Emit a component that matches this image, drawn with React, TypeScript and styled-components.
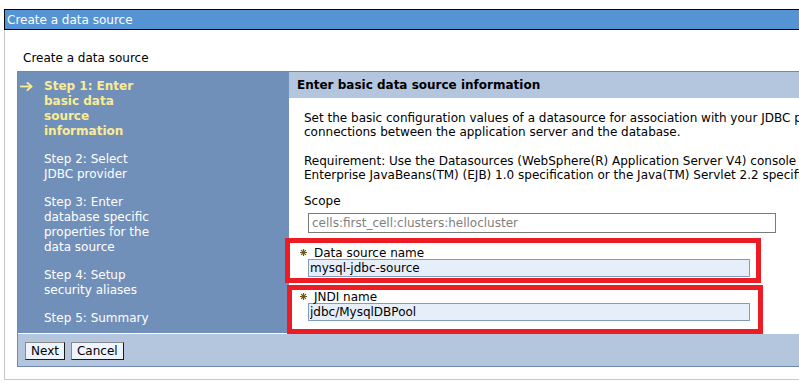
import React from 'react';
import styled, { createGlobalStyle } from 'styled-components';

const GlobalStyle = createGlobalStyle`
  html, body {
    margin: 0;
    overflow: hidden;
    background: #fff;
  }
  body {
    font-family: 'DejaVu Sans', 'Liberation Sans', sans-serif;
    font-size: 12px;
    color: #000;
  }
`;

const Page = styled.div`
  width: 1100px;
  padding: 9px 0 0 4px;
`;

const TitleBar = styled.div`
  height: 19px;
  line-height: 20px;
  padding-left: 2px;
  background: #5494d4;
  border: 1px solid #000;
  color: #fff;
`;

const Frame = styled.div`
  border-left: 1px solid #c8c8c8;
  border-bottom: 1px solid #c8c8c8;
  padding: 20px 0 12px 12px;
`;

const Heading = styled.div`
  line-height: 16px;
  padding-left: 6px;
  margin-bottom: 5px;
`;

const Wizard = styled.div`
  border-top: 1px solid #7088b0;
  border-left: 1px solid #7088b0;
  border-bottom: 1px solid #7088b0;
  background: #fff;
`;

const WizardRow = styled.div`
  display: flex;
  height: 261px;
`;

const StepNav = styled.ul`
  list-style: none;
  margin: 0;
  padding: 7px 0 0 2px;
  width: 269px;
  background: #7190b9;
  display: flex;
  flex-direction: column;
  gap: 13px;
  flex-shrink: 0;
`;

const Step = styled.li<{ $current?: boolean }>`
  display: flex;
  line-height: 15px;
  color: ${({ $current }) => ($current ? '#fbec92' : '#fff')};
  font-weight: ${({ $current }) => ($current ? 'bold' : 'normal')};
`;

const StepMarker = styled.span`
  width: 24px;
  flex-shrink: 0;
  display: flex;
  align-items: flex-start;
  padding-top: 3px;
  box-sizing: border-box;
`;

const StepText = styled.span`
  width: 112px;
`;

const Main = styled.div`
  flex: 1;
  display: flex;
  flex-direction: column;
`;

const MainHeader = styled.div`
  height: 26px;
  line-height: 27px;
  padding-left: 8px;
  background: #b4c5de;
  font-weight: bold;
`;

const Content = styled.div`
  padding: 13px 0 0 15px;
`;

const Para = styled.p`
  margin: 0 0 15px;
  line-height: 14px;
  white-space: nowrap;
`;

const ScopeLabel = styled.div`
  margin-top: -2px;
  line-height: 13px;
`;

const ScopeInput = styled.input`
  display: block;
  box-sizing: border-box;
  width: 468px;
  height: 20px;
  margin: 5px 0 5px 4px;
  padding: 0 3px;
  border: 1px solid #7a7a7a;
  background: #fff;
  color: #808080;
  font: inherit;
  outline: none;
`;

const FieldBox = styled.div<{ $shift: number; $padTop: number; $padBottom: number; $gapAbove: number }>`
  box-sizing: border-box;
  width: 476px;
  margin: ${({ $gapAbove, $shift }) => `${$gapAbove}px 0 0 ${$shift}px`};
  padding: ${({ $padTop, $padBottom, $shift }) =>
    `${$padTop}px 0 ${$padBottom}px ${4 - $shift - 5}px`};
  border: 5px solid #ed1c24;
`;

const FieldLabel = styled.label`
  display: flex;
  align-items: center;
  gap: 7px;
  height: 13px;
  margin-left: -8px;
`;

const FieldInput = styled.input`
  display: block;
  box-sizing: border-box;
  width: 442px;
  height: 18px;
  padding: 0 1px;
  border: 1px solid #7f9dbf;
  background: #e6eefa;
  color: #000;
  font: inherit;
  outline: none;
`;

const BottomBar = styled.div`
  border-top: 1px solid #fff;
  background: #b4c5de;
  height: 33px;
  padding: 8px 0 0 7px;
  box-sizing: border-box;
  display: flex;
  gap: 6px;
  align-items: flex-start;
`;

const Button = styled.button`
  height: 18px;
  padding: 0 5px;
  background: #eef4fd;
  border: 1px solid;
  border-color: #8a8a8a #1a1a1a #1a1a1a #8a8a8a;
  font: inherit;
  color: #000;
  line-height: 14px;
`;

const Required = () => (
  <svg width="7" height="7" viewBox="0 0 7 7" aria-hidden="true">
    <g stroke="#6b5a12" strokeWidth="1.2" strokeLinecap="round">
      <line x1="3.5" y1="0.5" x2="3.5" y2="6.5" />
      <line x1="0.5" y1="3.5" x2="6.5" y2="3.5" />
      <line x1="1.4" y1="1.4" x2="5.6" y2="5.6" />
      <line x1="5.6" y1="1.4" x2="1.4" y2="5.6" />
    </g>
  </svg>
);

const CurrentArrow = () => (
  <svg width="13" height="9" viewBox="0 0 13 9" aria-hidden="true">
    <g stroke="#fbec92" strokeWidth="1.8" fill="none" strokeLinecap="square">
      <line x1="1" y1="4.5" x2="11" y2="4.5" />
      <polyline points="7.5,1 11.5,4.5 7.5,8" />
    </g>
  </svg>
);

const steps = [
  'Step 1: Enter basic data source information',
  'Step 2: Select JDBC provider',
  'Step 3: Enter database specific properties for the data source',
  'Step 4: Setup security aliases',
  'Step 5: Summary',
];

export default function App() {
  return (
    <Page>
      <GlobalStyle />
      <TitleBar>Create a data source</TitleBar>
      <Frame>
        <Heading>Create a data source</Heading>
        <Wizard>
          <WizardRow>
            <StepNav>
              {steps.map((s, i) => (
                <Step key={s} $current={i === 0}>
                  <StepMarker>{i === 0 && <CurrentArrow />}</StepMarker>
                  <StepText>{s}</StepText>
                </Step>
              ))}
            </StepNav>
            <Main>
              <MainHeader>Enter basic data source information</MainHeader>
              <Content>
                <Para>
                  Set the basic configuration values of a datasource for association with your JDBC provider. A datasource supplies the physical
                  <br />
                  connections between the application server and the database.
                </Para>
                <Para>
                  Requirement: Use the Datasources (WebSphere(R) Application Server V4) console pages if your applications are based on the
                  <br />
                  Enterprise JavaBeans(TM) (EJB) 1.0 specification or the Java(TM) Servlet 2.2 specification.
                </Para>
                <ScopeLabel>Scope</ScopeLabel>
                <ScopeInput readOnly value="cells:first_cell:clusters:hellocluster" />
                <FieldBox $shift={-19} $gapAbove={0} $padTop={3} $padBottom={1}>
                  <FieldLabel>
                    <Required />
                    Data source name
                  </FieldLabel>
                  <FieldInput readOnly value="mysql-jdbc-source" />
                </FieldBox>
                <FieldBox $shift={-17} $gapAbove={2} $padTop={0} $padBottom={8}>
                  <FieldLabel>
                    <Required />
                    JNDI name
                  </FieldLabel>
                  <FieldInput readOnly value="jdbc/MysqlDBPool" />
                </FieldBox>
              </Content>
            </Main>
          </WizardRow>
          <BottomBar>
            <Button>Next</Button>
            <Button>Cancel</Button>
          </BottomBar>
        </Wizard>
      </Frame>
    </Page>
  );
}
